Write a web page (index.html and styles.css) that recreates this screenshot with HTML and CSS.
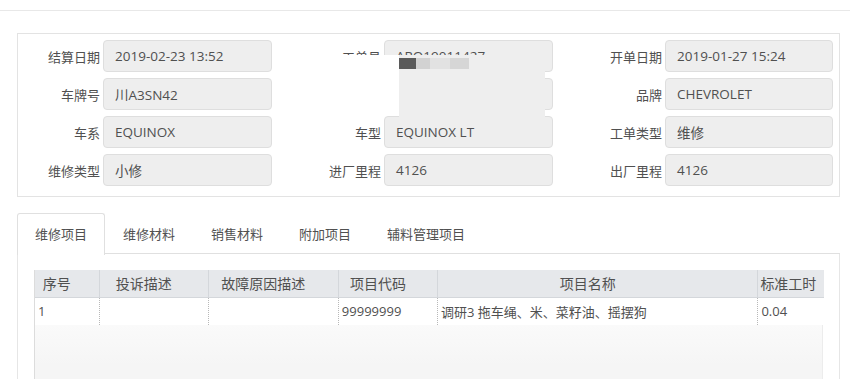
FILE: index.html
```html
<!DOCTYPE html>
<html lang="zh-CN">
<head>
<meta charset="utf-8">
<title>工单详情</title>
<link rel="stylesheet" href="styles.css">
</head>
<body>
<div class="topbar"></div>

<section class="info-panel">
  <div class="form-grid">
    <label class="lbl">结算日期</label><div class="inp">2019-02-23 13:52</div>
    <label class="lbl">工单号</label><div class="inp">ARO19011427</div>
    <label class="lbl">开单日期</label><div class="inp">2019-01-27 15:24</div>

    <label class="lbl">车牌号</label><div class="inp">川A3SN42</div>
    <label class="lbl">VIN码</label><div class="inp"></div>
    <label class="lbl">品牌</label><div class="inp">CHEVROLET</div>

    <label class="lbl">车系</label><div class="inp">EQUINOX</div>
    <label class="lbl">车型</label><div class="inp">EQUINOX LT</div>
    <label class="lbl">工单类型</label><div class="inp">维修</div>

    <label class="lbl">维修类型</label><div class="inp">小修</div>
    <label class="lbl">进厂里程</label><div class="inp">4126</div>
    <label class="lbl">出厂里程</label><div class="inp">4126</div>
  </div>
  <div class="mask-white"></div>
  <div class="mask-grey"><span class="mask-dark"></span><span class="mask-light"></span></div>
</section>

<section class="tabs">
  <ul class="tab-list">
    <li class="tab active">维修项目</li>
    <li class="tab">维修材料</li>
    <li class="tab">销售材料</li>
    <li class="tab">附加项目</li>
    <li class="tab">辅料管理项目</li>
  </ul>
  <div class="tab-body">
    <div class="grid">
      <table class="grid-table">
        <colgroup>
          <col class="c1"><col class="c2"><col class="c3"><col class="c4"><col class="c5"><col class="c6">
        </colgroup>
        <thead>
          <tr>
            <th>序号</th><th>投诉描述</th><th>故障原因描述</th><th>项目代码</th><th>项目名称</th><th>标准工时</th>
          </tr>
        </thead>
        <tbody>
          <tr>
            <td>1</td><td></td><td></td><td>99999999</td><td>调研3 拖车绳、米、菜籽油、摇摆狗</td><td>0.04</td>
          </tr>
        </tbody>
      </table>
      <div class="grid-empty"></div>
    </div>
  </div>
</section>
</body>
</html>
```

FILE: styles.css
```css
* { box-sizing: border-box; }
html, body { margin: 0; padding: 0; background: #fff; }
body {
  font-family: "Open Sans", "Noto Sans CJK SC", sans-serif;
  font-size: 13px;
  color: #555;
  overflow: hidden;
}

.topbar {
  height: 11px;
  border-bottom: 1px solid #e8e8e8;
}

.info-panel {
  position: relative;
  margin: 22px 10px 0 17px;
  border: 1px solid #e3e3e3;
  padding: 6px 6px 10px 0;
}

.form-grid {
  display: grid;
  grid-template-columns: 85px 169px 112px 169px 112px 168px;
  grid-auto-rows: 32px;
  row-gap: 6px;
}

.lbl {
  display: flex;
  align-items: center;
  justify-content: flex-end;
  padding-right: 3px;
  color: #505050;
  font-size: 13px;
  white-space: nowrap;
}

.inp {
  display: flex;
  align-items: center;
  padding-left: 11px;
  background: #eeeeee;
  border: 1px solid #dedede;
  border-radius: 4px;
  color: #505050;
  font-size: 13.5px;
  white-space: nowrap;
  overflow: hidden;
}

.mask-white {
  position: absolute;
  left: 282px;
  top: 21px;
  width: 99px;
  height: 61px;
  background: #fff;
}
.mask-grey {
  position: absolute;
  left: 381px;
  top: 21px;
  width: 146px;
  height: 66px;
  background: #eeeeee;
}
.mask-dark {
  position: absolute;
  left: 0;
  top: 3px;
  width: 17px;
  height: 11px;
  background: #5a5a5a;
}
.mask-light {
  position: absolute;
  left: 17px;
  top: 3px;
  width: 53px;
  height: 11px;
  background: linear-gradient(90deg, #d2d2d2 0 26%, #e2e2e2 26% 64%, #d6d6d6 64% 100%);
}

.tabs {
  margin: 16px 10px 0 17px;
}
.tab-list {
  display: flex;
  list-style: none;
  margin: 0;
  padding: 0;
  border-bottom: 1px solid #e0e0e0;
  height: 41px;
}
.tab {
  padding: 0 17px;
  line-height: 40px;
  height: 41px;
  font-size: 13px;
  color: #505050;
  border: 1px solid transparent;
  border-bottom: none;
}
.tab.active {
  background: #fff;
  border-color: #e0e0e0;
  border-radius: 3px 3px 0 0;
  height: 42px;
}

.tab-body {
  border: 1px solid #e6e6e6;
  border-top: none;
  padding: 16px 16px 0 16px;
  height: 200px;
}

.grid {
  border-left: 1px solid #dcdcdc;
  border-right: 1px solid #ececec;
}
.grid-table {
  width: 789px;
  table-layout: fixed;
  border-collapse: collapse;
}
.c1 { width: 64px; }
.c2 { width: 109px; }
.c3 { width: 130px; }
.c4 { width: 99px; }
.c5 { width: 320px; }
.c6 { width: 66px; }

.grid-table th {
  height: 27px;
  padding: 0 22px 0 2px;
  background: #e6e8eb;
  border-left: 1px solid #d4d7db;
  border-bottom: 1px solid #d4d7db;
  font-weight: normal;
  font-size: 14px;
  color: #505050;
  text-align: center;
  white-space: nowrap;
  overflow: hidden;
}
.grid-table th:first-child { border-left: none; }
.grid-table th:last-child { padding-right: 0; text-align: left; }

.grid-table td {
  height: 28px;
  padding: 0 3px;
  background: #fff;
  border-left: 1px dotted #b8b8b8;
  font-size: 13px;
  color: #505050;
  white-space: nowrap;
  overflow: hidden;
}
.grid-table td:first-child { border-left: none; }

.grid-empty {
  height: 120px;
  background: linear-gradient(#fafafa, #f5f5f5 40px);
}
```
